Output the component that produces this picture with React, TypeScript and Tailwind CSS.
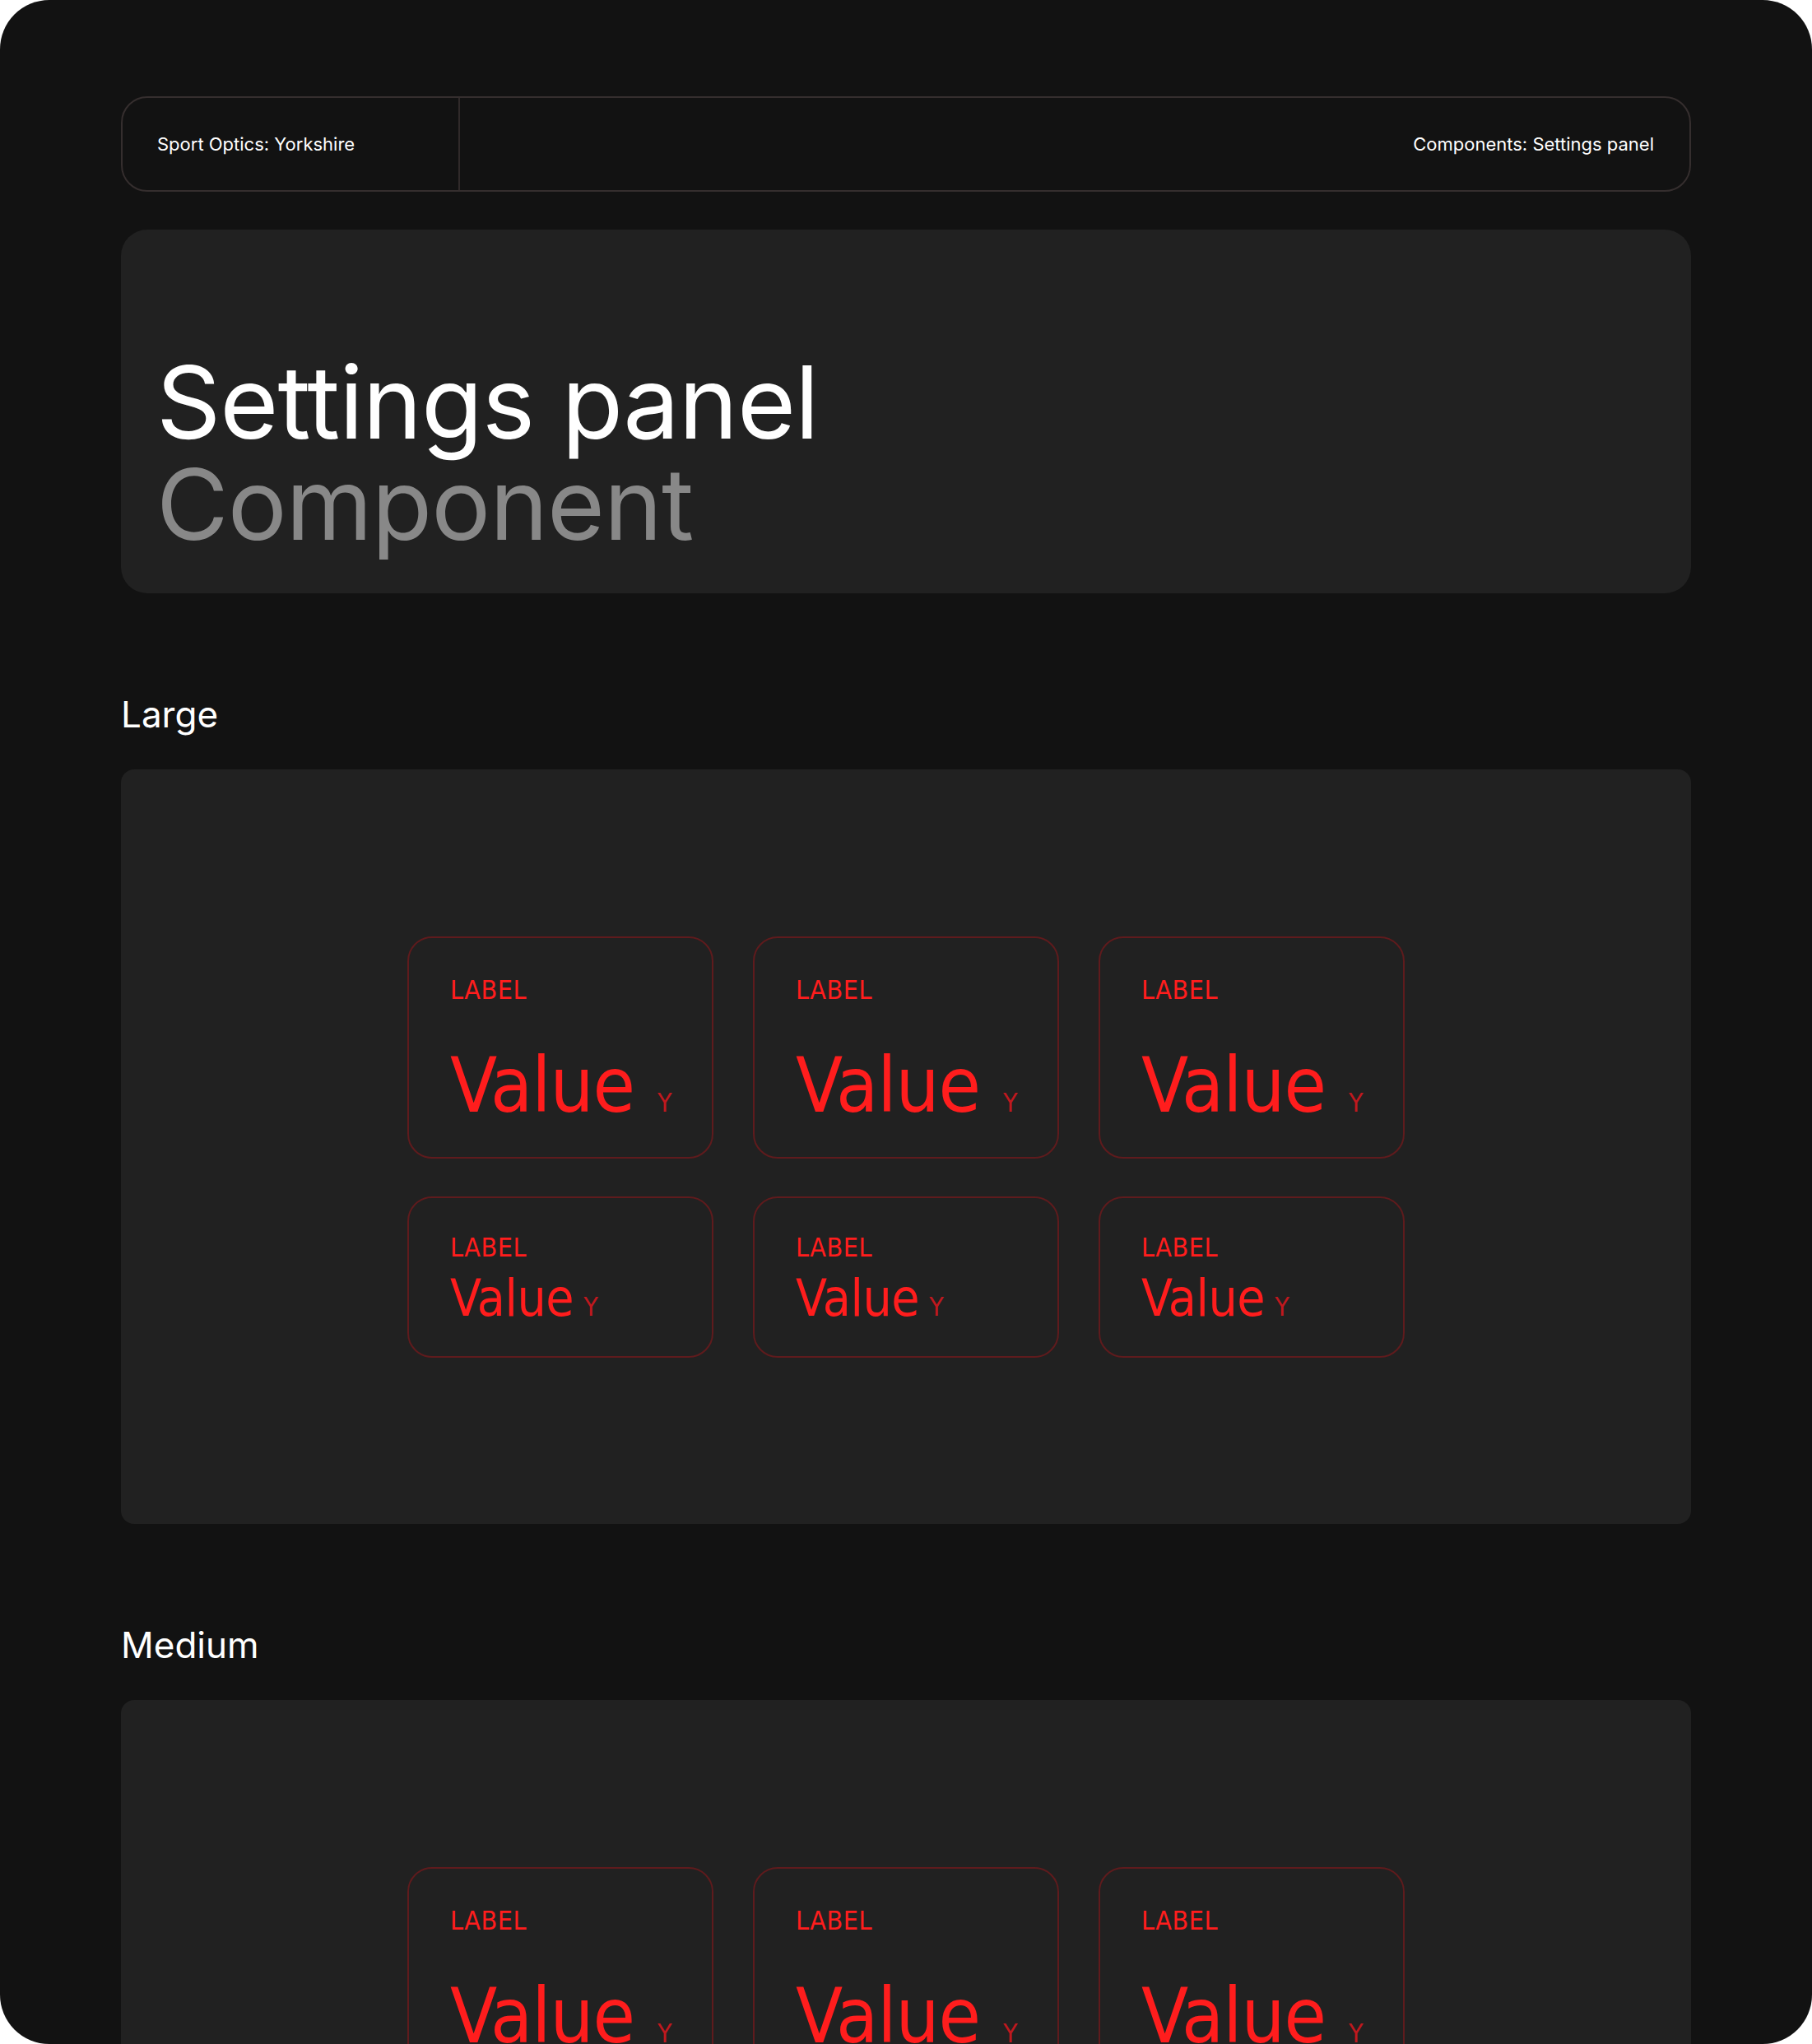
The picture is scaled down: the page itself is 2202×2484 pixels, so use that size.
import React from 'react';

type Size = 'large' | 'small';

interface ReadoutProps {
  size: Size;
  label?: string;
  value?: string;
  unit?: string;
}

const readoutFont = { fontFamily: '"Liberation Sans Narrow", "DejaVu Sans Condensed", "Roboto", sans-serif' };

const Readout: React.FC<ReadoutProps> = ({ size, label = 'LABEL', value = 'Value', unit = 'Y' }) => {
  const isLarge = size === 'large';

  return (
    <div
      style={readoutFont}
      className={
        isLarge
          ? 'w-[372px] h-[270px] rounded-[30px] border-2 border-[#5f1b1d] flex flex-col px-[50px] pt-[47px]'
          : 'w-[372px] h-[196px] rounded-[30px] border-2 border-[#5f1b1d] flex flex-col px-[50px] pt-[44px]'
      }
    >
      <span className="text-[32px] leading-[32px] text-[#ff1d1d] tracking-[0.5px]">{label}</span>
      <div className={isLarge ? 'flex items-baseline gap-[28px] mt-[53px]' : 'flex items-baseline gap-[12px] mt-[15px]'}>
        <span className={isLarge ? 'text-[93px] leading-[94px] text-[#ff1d1d] tracking-[-1px]' : 'text-[62px] leading-[62px] text-[#ff1d1d] tracking-[-0.5px]'}>
          {value}
        </span>
        <span className="text-[32px] leading-[32px] text-[#c0181e]">{unit}</span>
      </div>
    </div>
  );
};

const Section: React.FC<{ title: string }> = ({ title }) => (
  <section className="mt-[121px]">
    <h2 className="text-[44px] leading-[53px] text-white font-normal">{title}</h2>
    <div className="mt-[40px] h-[917px] rounded-[16px] bg-[#212121] flex items-center justify-center">
      <div className="flex flex-col gap-[46px]">
        <div className="flex gap-[48px]">
          <Readout size="large" />
          <Readout size="large" />
          <Readout size="large" />
        </div>
        <div className="flex gap-[48px]">
          <Readout size="small" />
          <Readout size="small" />
          <Readout size="small" />
        </div>
      </div>
    </div>
  </section>
);

export default function App() {
  return (
    <div className="bg-white w-[2202px] h-[2484px]" style={{ fontFamily: 'Inter, "Noto Sans", sans-serif' }}>
      <div className="h-[2484px] rounded-[60px] bg-[#121212] overflow-hidden px-[147px] pt-[117px]">
        {/* breadcrumb bar */}
        <header className="h-[116px] rounded-[32px] border-2 border-[#352e2e] flex text-white">
          <div className="w-[410px] border-r-2 border-[#302a2a] flex items-center pl-[42px] text-[22px]">
            Sport Optics: Yorkshire
          </div>
          <div className="flex-1 flex items-center justify-end pr-[43px] text-[22px]">
            Components: Settings panel
          </div>
        </header>

        {/* hero */}
        <div className="mt-[46px] h-[442px] rounded-[32px] bg-[#212121] flex flex-col justify-end px-[43px] pb-[46px]">
          <h1 className="leading-[124px] font-normal">
            <span className="block text-[122px] tracking-[-1px] text-white">Settings panel</span>
            <span className="block text-[120px] tracking-[-1px] text-[#888888]">Component</span>
          </h1>
        </div>

        <Section title="Large" />
        <Section title="Medium" />
      </div>
    </div>
  );
}
